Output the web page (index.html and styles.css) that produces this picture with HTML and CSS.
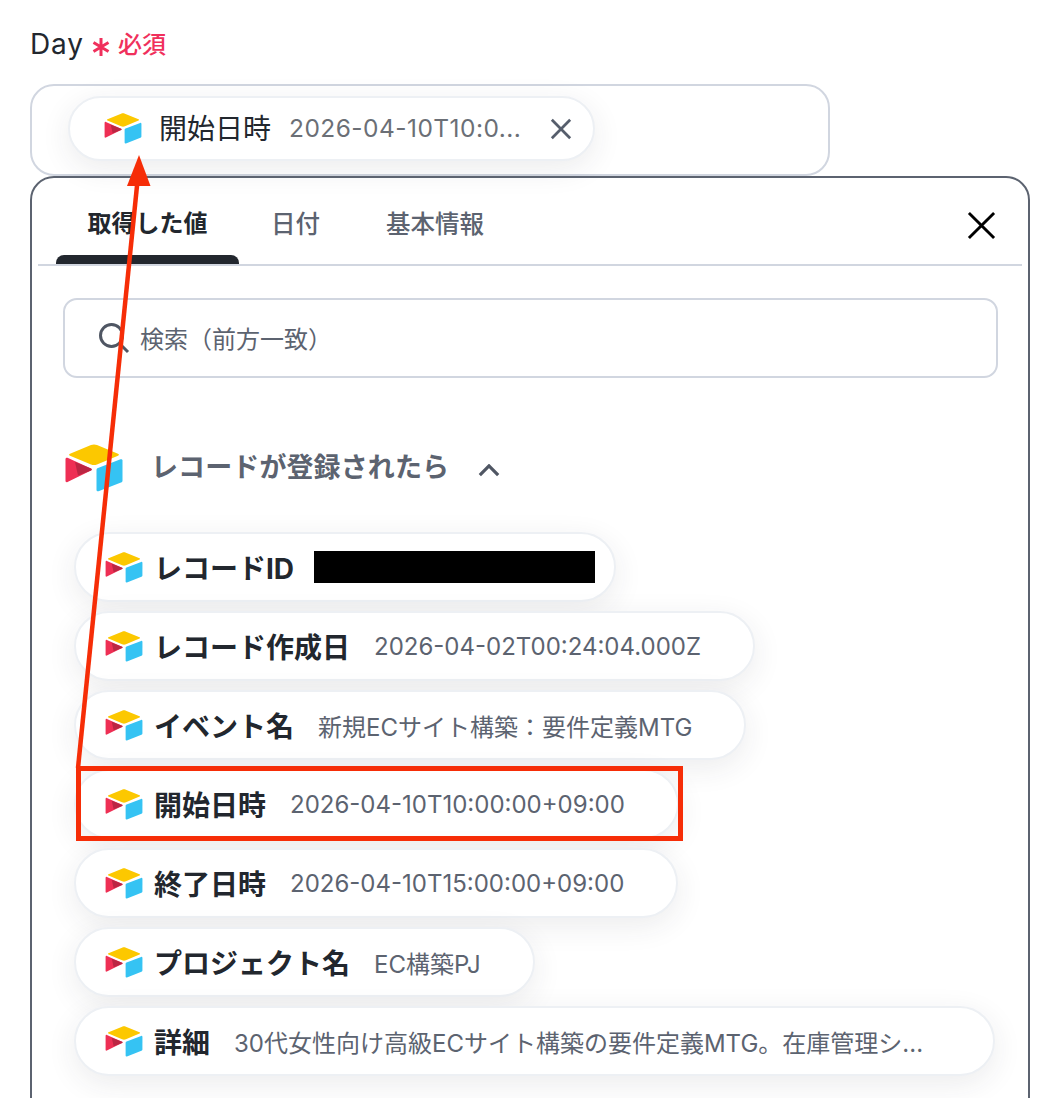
FILE: index.html
```html
<!DOCTYPE html>
<html lang="ja">
<head>
<meta charset="utf-8">
<title>Day</title>
<link rel="stylesheet" href="styles.css">
</head>
<body>
<svg class="defs" width="0" height="0">
  <symbol id="at" viewBox="0 0 58 48">
    <path d="M26 1 5 9.800c-1.200.5-1.200 1.500 0 2L26 20.500c2 .8 4 .8 6 0L53 11.800c1.200-.5 1.200-1.500 0-2L32 1c-2-.8-4-.8-6 0Z" fill="#fcc800"/>
    <path d="M31.500 26v20c0 1 1 1.500 2 1.200l22.500-8.700c1-.4 1.500-1.100 1.500-2V16.500c0-1-1-1.500-2-1.200L33 24c-1 .4-1.500 1.100-1.500 2Z" fill="#35c3f3"/>
    <path d="M0.500 15c0-1 1-1.700 2-1.200L26 24.500c1 .5 1 1.500 0 2L2.500 38c-1 .5-2 0-2-1Z" fill="#ee2f54"/>
    <path d="M10 18 26 24.500c1 .5 1 1.500 0 2L13 31.500Z" fill="#bb2643"/>
  </symbol>
</svg>
<main class="page">
  <div class="field-label"><span>Day</span><svg class="star" viewBox="0 0 18 20"><path d="M9 1V19M1.500 5.500 16.500 14.500M16.500 5.500 1.500 14.500"/></svg><span class="req">必須</span></div>
  <div class="input-box">
    <div class="chip chip-selected">
      <svg class="ico-small"><use href="#at"/></svg>
      <span class="sel-name">開始日時</span>
      <span class="sel-val">2026-04-10T10:0...</span>
      <svg class="chip-x" viewBox="0 0 24 24"><path d="M2 2 22 22M22 2 2 22"/></svg>
    </div>
  </div>
  <section class="panel">
    <div class="tabs">
      <div class="tab tab-active">取得した値</div>
      <div class="tab tab-date">日付</div>
      <div class="tab">基本情報</div>
      <svg class="panel-x" viewBox="0 0 30 30"><path d="M2 2 28 28M28 2 2 28"/></svg>
    </div>
    <div class="search">
      <svg class="search-ico" viewBox="0 0 32 32"><circle cx="13.500" cy="13.500" r="11"/><path d="M21.500 21.500 30 30"/></svg>
      <span class="search-text">検索（前方一致）</span>
    </div>
    <div class="group">
      <svg class="ico-large"><use href="#at"/></svg>
      <span class="group-title">レコードが登録されたら</span>
      <svg class="chev" viewBox="0 0 24 14"><path d="M2 12 12 2 22 12"/></svg>
    </div>
    <div class="list">
      <div class="chip row row-id"><svg class="ico-row"><use href="#at"/></svg><b>レコードID</b><i class="redact"></i></div>
      <div class="chip row"><svg class="ico-row"><use href="#at"/></svg><b>レコード作成日</b><span>2026-04-02T00:24:04.000Z</span></div>
      <div class="chip row"><svg class="ico-row"><use href="#at"/></svg><b>イベント名</b><span>新規ECサイト構築：要件定義MTG</span></div>
      <div class="chip row"><svg class="ico-row"><use href="#at"/></svg><b>開始日時</b><span>2026-04-10T10:00:00+09:00</span></div>
      <div class="chip row"><svg class="ico-row"><use href="#at"/></svg><b>終了日時</b><span>2026-04-10T15:00:00+09:00</span></div>
      <div class="chip row"><svg class="ico-row"><use href="#at"/></svg><b>プロジェクト名</b><span>EC構築PJ</span></div>
      <div class="chip row row-long"><svg class="ico-row"><use href="#at"/></svg><b>詳細</b><span>30代女性向け高級ECサイト構築の要件定義MTG。在庫管理シ...</span></div>
    </div>
  </section>
</main>
<div class="mark-box"></div>
<svg class="mark-arrow" viewBox="0 0 1054 1098" width="1054" height="1098">
  <path d="M78 768 138 176" fill="none" stroke="#f62d07" stroke-width="4.500"/>
  <path d="M139 155 150.500 186H127Z" fill="#f62d07"/>
</svg>
</body>
</html>
```
FILE: styles.css
```css
* { box-sizing: border-box; }
html, body { margin: 0; height: 1098px; overflow: hidden; background: #fff; }
body { font-family: Inter, "Noto Sans CJK JP", sans-serif; color: #22272e; position: relative; }
.defs { position: absolute; }
.page { padding: 25px 0 0 30px; width: 1054px; }

.field-label { display: flex; align-items: center; height: 38px; font-size: 28px; letter-spacing: .9px; }
.star { width: 18px; height: 20px; margin: 6px 8px 0 8px; fill: none; stroke: #f0305c; stroke-width: 3; }
.req { color: #f0305c; font-size: 24px; margin-bottom: 4px; font-weight: 500; letter-spacing: 0; }

.input-box { margin-top: 21px; width: 800px; height: 92px; border: 2px solid #d1d6e0; border-radius: 24px; padding: 10px 0 0 36px; }
.chip { display: flex; align-items: center; background: #fff; border: 2px solid #edf0f4; border-radius: 36px; box-shadow: 0 8px 30px rgba(40, 44, 60, .09); }
.chip-selected { width: 527px; height: 65px; padding-left: 34px; }
.ico-small { width: 38px; height: 31px; flex: none; }
.sel-name { font-size: 28px; margin: 0 0 4px 17px; }
.sel-val { font-size: 24.500px; color: #6b6f76; margin: 0 0 2px 18px; letter-spacing: .45px; white-space: nowrap; }
.chip-x { width: 22px; height: 22px; flex: none; margin: 0 21px 0 auto; fill: none; stroke: #565e6c; stroke-width: 3; }

.panel { width: 1000px; height: 960px; border: 2px solid #5c6370; border-radius: 24px; padding: 0 6px; }
.tabs { display: flex; height: 88px; border-bottom: 2px solid #d1d6e0; position: relative; padding-left: 18px; }
.tab { font-size: 24.500px; font-weight: 500; color: #5c6370; text-align: center; padding-top: 28px; line-height: 36px; }
.tab-active { width: 183px; font-size: 24px; color: #22272e; font-weight: 700; position: relative; margin-right: 32px; }
.tab-date { margin-right: 66px; }
.tab-active::after { content: ""; position: absolute; left: 0; right: 0; bottom: 0; height: 9px; background: #22272e; border-radius: 8px 8px 0 0; }
.panel-x { width: 29px; height: 29px; position: absolute; right: 26px; top: 33px; fill: none; stroke: #000; stroke-width: 3; }

.search { margin: 32px 0 0 25px; width: 935px; height: 80px; border: 2px solid #d1d6e0; border-radius: 14px; display: flex; align-items: center; padding-left: 33px; font-size: 24px; color: #5c6370; }
.search-ico { width: 32px; height: 32px; flex: none; fill: none; stroke: #4f5663; stroke-width: 3; margin-right: 10px; }
.search-text { margin-bottom: 2px; }

.group { display: flex; align-items: center; margin: 65px 0 0 27px; height: 50px; }
.ico-large { width: 58px; height: 48px; flex: none; }
.group-title { margin: 0 0 6px 28px; font-size: 27px; font-weight: 700; color: #5c6370; letter-spacing: .1px; }
.chev { width: 22px; height: 13px; margin: 4px 0 0 29px; fill: none; stroke: #4f5663; stroke-width: 3.500; }

.list { display: flex; flex-direction: column; align-items: flex-start; gap: 9px; margin: 39px 0 0 36px; }
.row { height: 70px; padding: 0 52px 0 29px; }
.row-id { padding-right: 19px; }
.row-long { padding-right: 70px; }
.ico-row { width: 38px; height: 31px; flex: none; }
.row b { font-size: 28px; font-weight: 700; margin-left: 11px; white-space: nowrap; }
.row span { font-size: 24px; color: #5c6370; margin-left: 24px; white-space: nowrap; }
.redact { width: 281px; height: 32px; background: #000; margin-left: 20px; }

.mark-box { position: absolute; left: 76px; top: 766px; width: 607px; height: 75px; border: 5px solid #f62d07; }
.mark-arrow { position: absolute; left: 0; top: 0; pointer-events: none; }
```
